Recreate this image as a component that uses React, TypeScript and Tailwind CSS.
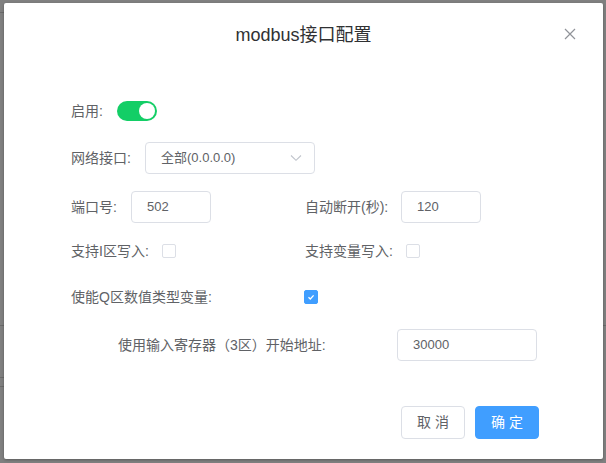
import React, { useState } from 'react'

const font = { fontFamily: '"Liberation Sans", "Noto Sans CJK SC", sans-serif' }

const Checkbox: React.FC<{ checked?: boolean }> = ({ checked }) =>
  checked ? (
    <span className="w-[14px] h-[14px] rounded-[2px] bg-[#409eff] border border-[#409eff] flex items-center justify-center">
      <svg width="10" height="10" viewBox="0 0 10 10">
        <path d="M2.5 5.2 L4.3 7 L7.6 3.4" fill="none" stroke="#fff" strokeWidth="1.3" />
      </svg>
    </span>
  ) : (
    <span className="w-[14px] h-[14px] rounded-[2px] bg-white border border-[#dcdfe6] block" />
  )

const Input: React.FC<{ value: string; w: string }> = ({ value, w }) => (
  <div className={`${w} h-[32px] border border-[#dcdfe6] rounded-[4px] px-[15px] flex items-center text-[13px] text-[#606266]`}>
    {value}
  </div>
)

const App: React.FC = () => {
  const [on] = useState(true)
  return (
    <div className="relative w-[606px] h-[463px] bg-[#808080] pl-[4px] pt-[3px] overflow-hidden" style={font}>
      {/* faint page behind overlay */}
      <div className="absolute left-0 top-[12px] w-[4px] h-px bg-[#6b6b6b]" />
      <div className="absolute left-0 top-[325px] w-[4px] h-px bg-[#6b6b6b]" />
      <div className="absolute left-0 top-[377px] w-[4px] h-px bg-[#6b6b6b]" />
      <div className="absolute left-0 top-[386px] w-[4px] h-px bg-[#6b6b6b]" />
      <div className="absolute right-0 top-[325px] w-[3px] h-px bg-[#6b6b6b]" />

      <div className="relative w-[599px] h-[456px] bg-white rounded-[2px] shadow-[0_1px_3px_rgba(0,0,0,0.3)] flex flex-col">
        <div className="pt-[20px] h-[44px] text-center text-[18px] leading-[24px] text-[#303133]">
          modbus接口配置
        </div>
        <button className="absolute right-[27px] top-[25px] w-[12px] h-[12px] flex items-center justify-center">
          <svg width="12" height="12" viewBox="0 0 12 12">
            <path d="M1 1 L11 11 M11 1 L1 11" stroke="#909399" strokeWidth="1.2" />
          </svg>
        </button>

        <div className="pl-[67px] text-[14px] text-[#606266] flex flex-col">
          <div className="mt-[48px] h-[32px] flex items-center">
            <span className="w-[46px]">启用:</span>
            <span className={`w-[40px] h-[20px] rounded-full flex items-center px-[2px] ${on ? 'bg-[#13ce66] justify-end' : 'bg-[#dcdfe6]'}`}>
              <span className="w-[16px] h-[16px] rounded-full bg-white" />
            </span>
          </div>

          <div className="mt-[15px] h-[32px] flex items-center">
            <span className="w-[74px]">网络接口:</span>
            <div className="w-[170px] h-[32px] border border-[#dcdfe6] rounded-[4px] pl-[15px] pr-[12px] flex items-center justify-between text-[13px] text-[#606266]">
              <span>全部(0.0.0.0)</span>
              <svg width="12" height="8" viewBox="0 0 12 8">
                <path d="M1 1.5 L6 6.3 L11 1.5" fill="none" stroke="#c0c4cc" strokeWidth="1.1" />
              </svg>
            </div>
          </div>

          <div className="mt-[17px] h-[32px] grid grid-cols-[234px_1fr] items-center">
            <div className="flex items-center">
              <span className="w-[60px]">端口号:</span>
              <Input value="502" w="w-[80px]" />
            </div>
            <div className="flex items-center">
              <span className="w-[96px]">自动断开(秒):</span>
              <Input value="120" w="w-[80px]" />
            </div>
          </div>

          <div className="mt-[12px] h-[32px] grid grid-cols-[234px_1fr] items-center">
            <div className="flex items-center">
              <span className="w-[91px]">支持I区写入:</span>
              <Checkbox />
            </div>
            <div className="flex items-center">
              <span className="w-[101px]">支持变量写入:</span>
              <Checkbox />
            </div>
          </div>

          <div className="mt-[14px] h-[32px] flex items-center">
            <span className="w-[233px]">使能Q区数值类型变量:</span>
            <Checkbox checked />
          </div>

          <div className="mt-[16px] h-[32px] flex items-center pl-[47px]">
            <span className="w-[279px]">使用输入寄存器（3区）开始地址:</span>
            <Input value="30000" w="w-[140px]" />
          </div>
        </div>

        <div className="mt-[45px] pr-[64px] flex justify-end gap-[10px] text-[14px]">
          <button className="w-[64px] h-[33px] border border-[#dcdfe6] rounded-[4px] bg-white text-[#606266]">
            取 消
          </button>
          <button className="w-[64px] h-[33px] border border-[#409eff] rounded-[4px] bg-[#409eff] text-white">
            确 定
          </button>
        </div>
      </div>
    </div>
  )
}

export default App
